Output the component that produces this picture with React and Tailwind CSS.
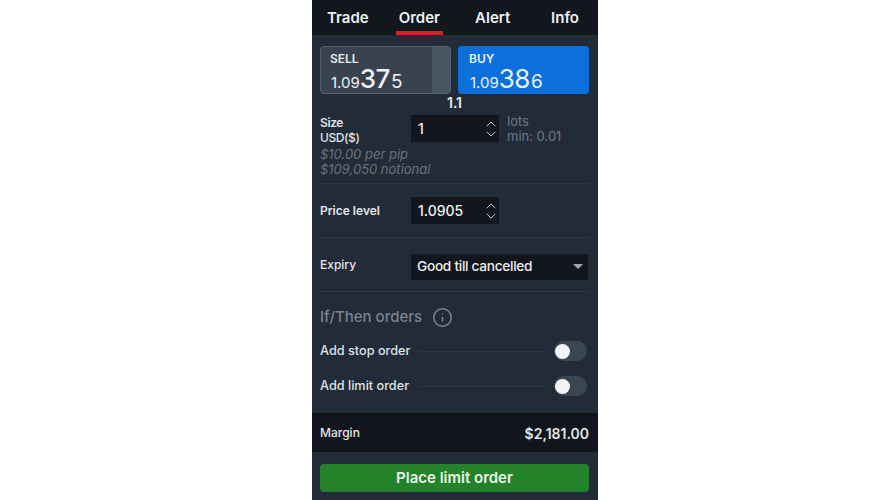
import { ChevronUp, ChevronDown, Info } from "lucide-react";

const font = { fontFamily: "Inter, sans-serif" };

function Stepper({ value }) {
  return (
    <div className="flex h-[27px] w-[88px] items-center justify-between bg-[#14161d] pl-[7px]">
      <span className="text-[14px] font-medium text-[#f1f3f5]">{value}</span>
      <div className="flex flex-col text-[#c3c8cf]">
        <ChevronUp size={16} strokeWidth={1.5} className="-mb-[3px]" />
        <ChevronDown size={16} strokeWidth={1.5} className="-mt-[3px]" />
      </div>
    </div>
  );
}

function Toggle({ label }) {
  return (
    <div className="flex h-[35px] items-center pr-[3px]">
      <span className="text-[12.7px] font-medium text-[#dfe2e6]">{label}</span>
      <div className="mx-[9px] h-px flex-1 bg-[#2d3643]" />
      <div className="flex h-[20px] w-[33px] items-center rounded-full bg-[#3b4653] pl-[1px]">
        <div className="h-[15px] w-[15px] rounded-full bg-[#f4f5f6]" />
      </div>
    </div>
  );
}

function Price({ big, small, weight }) {
  return (
    <div className="flex items-baseline whitespace-nowrap text-[#eef1f4] leading-none">
      <span className="text-[15px]">1.09</span>
      <span className={`text-[26px] tracking-[-0.5px] ${weight}`}>{big}</span>
      <span className="ml-[1px] text-[19px]">{small}</span>
    </div>
  );
}

export default function App() {
  return (
    <div className="flex h-[500px] w-full bg-white pl-[312px]" style={font}>
      <div className="flex h-full w-[286px] flex-col bg-[#222b38]">
        <div className="flex h-[35px] items-start bg-[#12161d] pl-[15px] pr-[19px] pt-[7px] text-[15px] font-semibold text-[#eef0f2]">
          <span>Trade</span>
          <div className="relative ml-[30px]">
            <span>Order</span>
            <div className="absolute -left-[3px] -right-[3px] top-[24px] h-[4px] bg-[#d8222a]" />
          </div>
          <span className="ml-[35px]">Alert</span>
          <span className="ml-auto">Info</span>
        </div>

        <div className="flex flex-col px-[8px]">
          <div className="mt-[11px] flex gap-[7px]">
            <div className="flex h-[48px] w-[131px] rounded-[4px] border border-[#566170] bg-[#39434f]">
              <div className="flex-1 pl-[9px] pt-[4px]">
                <div className="text-[12px] font-semibold leading-[15px] text-[#e8eaed]">SELL</div>
                <div className="ml-[1px]"><Price big="37" small="5" weight="font-medium" /></div>
              </div>
              <div className="w-[18px] rounded-r-[3px] bg-[#4a5563]" />
            </div>
            <div className="flex h-[48px] w-[131px] flex-col rounded-[4px] bg-[#0b6fdc] pl-[11px] pt-[5px]">
              <div className="text-[12px] font-semibold leading-[15px] text-[#e8f1fb]">BUY</div>
              <div className="ml-[1px]"><Price big="38" small="6" weight="font-normal" /></div>
            </div>
          </div>

          <div className="h-[19px] pr-[1px] text-center text-[14px] font-semibold leading-[18px] text-[#e8eaed]">1.1</div>

          <div className="flex items-start">
            <div className="w-[91px] pt-[2px] text-[12px] font-medium leading-[15px] tracking-[-0.4px] text-[#dfe2e6]">
              <div className="font-semibold">Size</div>
              <div>USD($)</div>
            </div>
            <div className="mt-[2px]"><Stepper value="1" /></div>
            <div className="ml-[8px] pt-[1px] text-[13px] leading-[15px] text-[#6f7885]">
              <div>lots</div>
              <div>min: 0.01</div>
            </div>
          </div>
          <div className="mt-[2px] text-[13px] italic leading-[15px] text-[#69727e]">
            <div>$10.00 per pip</div>
            <div>$109,050 notional</div>
          </div>

          <div className="mt-[6px] h-px bg-[#303a47]" />
          <div className="flex h-[53px] items-center">
            <span className="w-[91px] text-[12px] font-semibold text-[#e3e6e9]">Price level</span>
            <Stepper value="1.0905" />
          </div>
          <div className="h-px bg-[#303a47]" />
          <div className="flex h-[53px] items-center">
            <span className="w-[91px] text-[12px] font-medium text-[#e3e6e9]">Expiry</span>
            <div className="mt-[4px] flex h-[26px] w-[177px] items-center justify-between bg-[#14161d] pl-[6px] pr-[5px]">
              <span className="text-[13.7px] font-medium tracking-[-0.3px] text-[#eceef0]">Good till cancelled</span>
              <div className="h-0 w-0 border-x-[5px] border-t-[5px] border-x-transparent border-t-[#a4a8ae]" />
            </div>
          </div>
          <div className="h-px bg-[#303a47]" />

          <div className="mt-[14px] flex items-center gap-[10px] text-[#7a8491]">
            <span className="text-[15px] font-medium">If/Then orders</span>
            <Info size={21} strokeWidth={1.8} />
          </div>
          <div className="mt-[5px]">
            <Toggle label="Add stop order" />
            <Toggle label="Add limit order" />
          </div>
        </div>

        <div className="mt-[9px] flex h-[39px] items-center justify-between bg-[#12151c] pl-[8px] pr-[9px] pt-[2px] text-[#e3e6e9]">
          <span className="text-[12px] font-medium">Margin</span>
          <span className="text-[14px] font-semibold">$2,181.00</span>
        </div>
        <div className="mx-[8px] mt-[12px] flex h-[28px] w-[269px] items-center justify-center rounded-[4px] bg-[#24832a] pt-[2px] text-[15px] font-semibold text-[#e8f3e6]">
          Place limit order
        </div>
      </div>
    </div>
  );
}
